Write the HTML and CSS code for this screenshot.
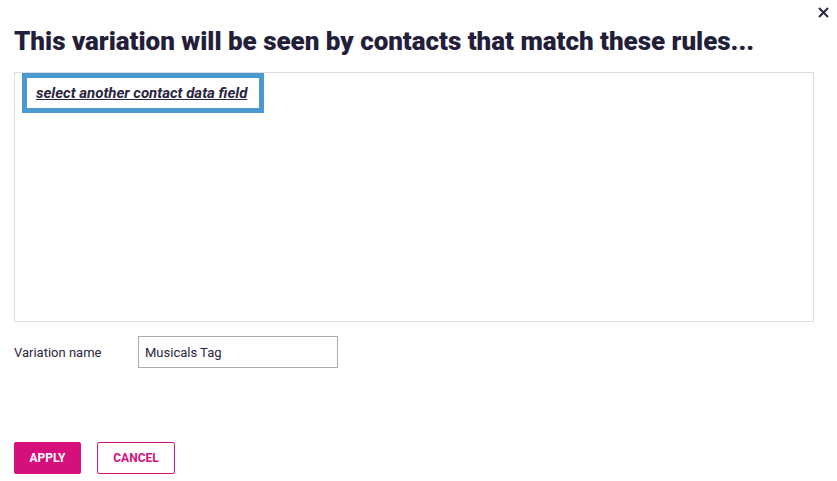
FILE: index.html
```html
<!DOCTYPE html>
<html>
<head>
<meta charset="utf-8">
<link rel="stylesheet" href="styles.css">
</head>
<body>
<div class="modal">
  <button class="close" aria-label="Close">
    <svg width="11" height="11" viewBox="0 0 11 11"><path d="M1 1L10 10M10 1L1 10" stroke="#2a2540" stroke-width="2" fill="none"/></svg>
  </button>
  <h1 class="title">This variation will be seen by contacts that match these rules...</h1>
  <div class="rules">
    <div class="field-select"><a href="#" class="field-link">select another contact data field</a></div>
  </div>
  <div class="name-row">
    <label class="name-label">Variation name</label>
    <input class="name-input" type="text" value="Musicals Tag">
  </div>
  <div class="actions">
    <button class="btn btn-primary">APPLY</button>
    <button class="btn btn-outline">CANCEL</button>
  </div>
</div>
</body>
</html>
```
FILE: styles.css
```css
* { box-sizing: border-box; }
html, body { margin: 0; padding: 0; background: #fff; }
body { font-family: Roboto, "Liberation Sans", sans-serif; color: #2a2540; }
.modal { position: relative; padding: 26px 23px 0 14px; width: 837px; height: 481px; }
.close { position: absolute; top: 7px; right: 8px; background: none; border: 0; padding: 0; width: 11px; height: 11px; cursor: pointer; }
.close svg { display: block; }
.title { margin: 0; font-size: 26px; font-weight: 900; line-height: 30px; color: #231f3a; letter-spacing: -0.03px; }
.rules { margin-top: 16px; height: 250px; border: 1px solid #dcdcdc; padding: 0 0 0 7px; }
.field-select { display: inline-block; border: 5px solid #4a9acf; padding: 5px 12px 6px 9px; }
.field-link { font-size: 15px; font-weight: 700; font-style: italic; color: #2a2540; text-decoration: underline; line-height: 18px; }
.name-row { display: flex; align-items: center; margin-top: 14px; }
.name-label { width: 124px; font-size: 13px; color: #2a2540; }
.name-input { width: 200px; height: 32px; border: 1px solid #adadad; padding: 0 6px; font-family: Roboto, sans-serif; font-size: 13px; color: #2a2540; }
.actions { display: flex; gap: 16px; margin-top: 74px; }
.btn { height: 32px; font-family: Roboto, sans-serif; font-size: 12px; font-weight: 700; border-radius: 2px; cursor: pointer; }
.btn-primary { width: 67px; background: #d5107c; border: 1px solid #d5107c; color: #fff; }
.btn-outline { width: 78px; background: #fff; border: 1px solid #d5107c; color: #d5107c; }
```
